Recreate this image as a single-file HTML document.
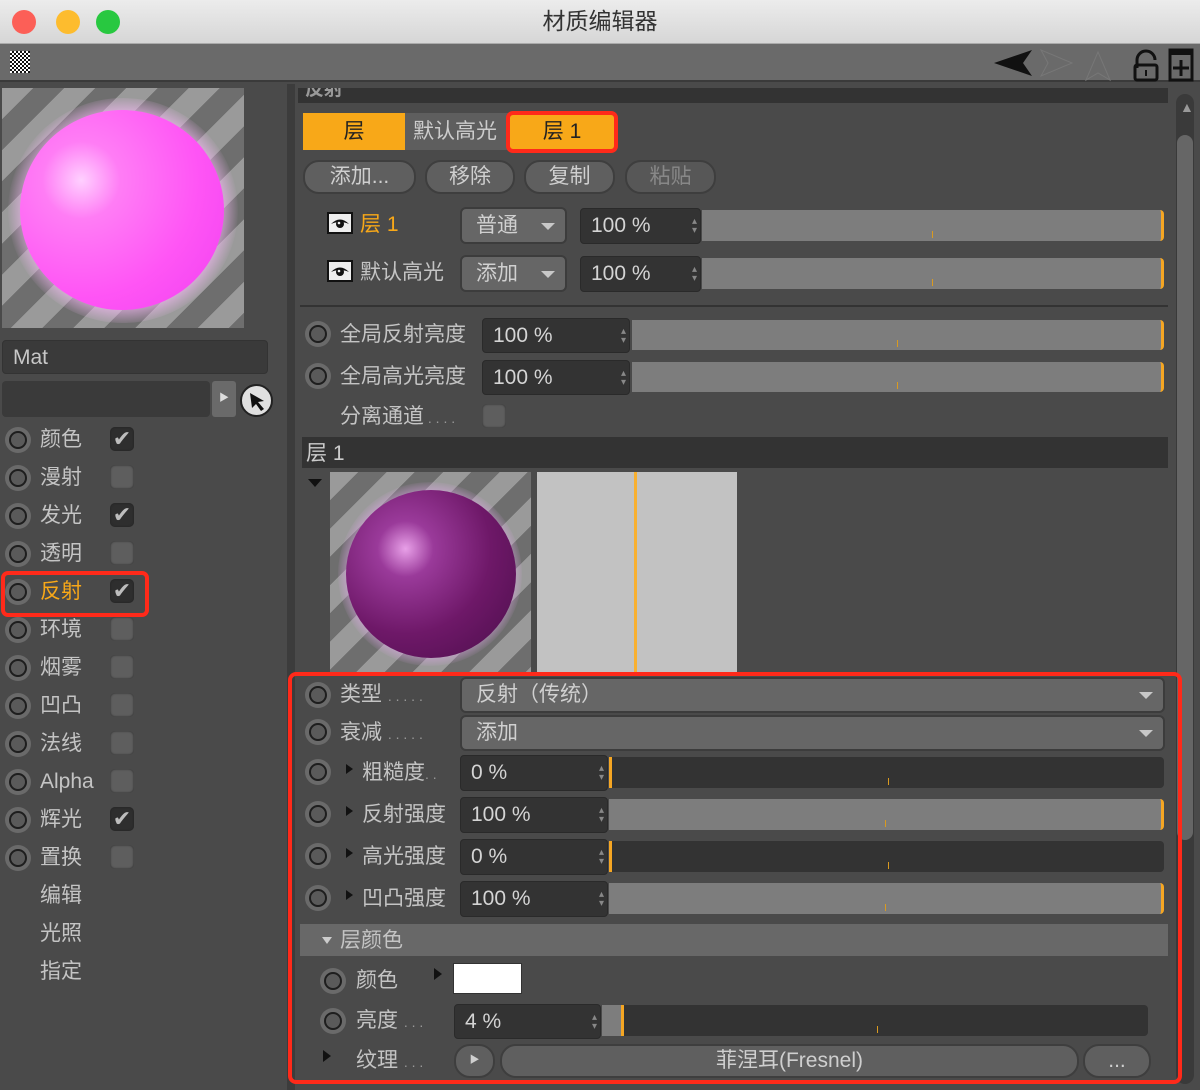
<!DOCTYPE html>
<html><head><meta charset="utf-8"><style>
*{box-sizing:border-box;margin:0;padding:0}
body{width:1200px;height:1090px;background:#4a4a4a;font-family:"Liberation Sans","Noto Sans CJK SC",sans-serif;color:#c8c8c8;position:relative;overflow:hidden}
.a{position:absolute}
.t{position:absolute;font-size:21px;line-height:1;white-space:nowrap;color:#c4c4c4}
.radio{position:absolute;width:26px;height:26px;border-radius:50%;background:#6a6a6a}
.radio:after{content:"";position:absolute;left:4px;top:4px;width:18px;height:18px;border-radius:50%;border:2px solid #1e1e1e;background:#5a5a5a;box-sizing:border-box}
.chk{position:absolute;width:24px;height:24px;border-radius:5px;background:#5e5e5e;box-shadow:inset 0 0 2px #222}
.chk.on{background:#2e2e2e;color:#bdbdbd;font-size:22px;line-height:24px;text-align:center}
.btn{position:absolute;background:#5f5f5f;border-radius:16px;border:2px solid #3e3e3e;color:#cfcfcf;font-size:21px;text-align:center}
.dd{position:absolute;background:#666;border-radius:6px;border:2px solid #3c3c3c;color:#d0d0d0;font-size:21px;padding-left:14px}
.dd:after{content:"";position:absolute;right:10px;top:50%;margin-top:-3px;border:7px solid transparent;border-top:7px solid #c8c8c8;border-bottom:0}
.fld{position:absolute;background:#333;border-radius:4px;border:1px solid #2a2a2a;color:#d4d4d4;font-size:21px;padding-left:10px}
.fld:after{content:"▴\A▾";white-space:pre;position:absolute;right:3px;top:50%;transform:translateY(-50%);font-size:10px;line-height:9px;color:#888}
.sl{position:absolute;background:#7d7d7d;border-right:3px solid #f5a623;border-radius:0 4px 4px 0}
.sl.d{background:#333;border-right:none;border-left:3px solid #f5a623}
.sl i{position:absolute;left:50%;bottom:3px;width:1px;height:7px;background:#d99a20}
.eye{position:absolute;width:26px;height:22px;background:#eee;border:2px solid #111}
</style></head><body>
<div class="a" style="left:0;top:0;width:1200px;height:44px;background:linear-gradient(#ececec,#d6d6d6);border-bottom:1px solid #aaa"></div>
<div class="a" style="left:12px;top:10px;width:24px;height:24px;border-radius:50%;background:#fc5f57"></div>
<div class="a" style="left:56px;top:10px;width:24px;height:24px;border-radius:50%;background:#fdbc2e"></div>
<div class="a" style="left:96px;top:10px;width:24px;height:24px;border-radius:50%;background:#28c840"></div>
<div class="t" style="left:0;width:1200px;text-align:center;top:10px;font-size:23px;color:#333">材质编辑器</div>
<div class="a" style="left:0;top:44px;width:1200px;height:38px;background:#6a6a6a;border-bottom:2px solid #3a3a3a"></div>
<div class="a" style="left:10px;top:51px;width:20px;height:22px;background:repeating-conic-gradient(#111 0 25%,#fff 0 50%) 0 0/4px 4px"></div>
<svg class="a" style="left:990px;top:46px" width="210" height="36">
<path d="M4 17 L42 4 L33 17 L42 30 Z" fill="#111"/>
<path d="M51 4 L82 17 L51 30 L58 17 Z" fill="none" stroke="#777"/>
<path d="M108 6 L120 34 L108 27 L96 34 Z" fill="none" stroke="#777"/>
<path d="M147 22 V14 a9 9 0 0 1 18 0" fill="none" stroke="#111" stroke-width="3"/>
<rect x="145" y="19" width="22" height="15" rx="2" fill="none" stroke="#111" stroke-width="3"/>
<rect x="155" y="24" width="2" height="6" fill="#111"/>
<rect x="180" y="4" width="22" height="30" fill="none" stroke="#111" stroke-width="3"/>
<rect x="180" y="4" width="22" height="5" fill="#111"/>
<path d="M191 14 V30 M183 22 H199" stroke="#111" stroke-width="3"/>
</svg>
<div class="a" style="left:287px;top:84px;width:8px;height:1006px;background:#3c3c3c"></div>
<div class="a" style="left:2px;top:88px;width:242px;height:240px;overflow:hidden;background:repeating-linear-gradient(135deg,#9a9a9a 0 22px,#6e6e6e 22px 44px)">
<div class="a" style="left:6px;top:10px;width:230px;height:225px;border-radius:50%;background:radial-gradient(circle,rgba(255,190,255,.9) 55%,rgba(255,200,255,0) 72%)"></div>
<div class="a" style="left:18px;top:22px;width:204px;height:200px;border-radius:50%;background:radial-gradient(circle at 30% 35%,#ffd0ff 0,#ff7df5 20%,#ff55f5 60%,#f040f0 100%)"></div>
</div>
<div class="a" style="left:2px;top:340px;width:266px;height:34px;background:#3a3a3a;border-radius:4px;border:1px solid #333"></div>
<div class="t" style="left:13px;top:347px;font-size:21px;color:#c8c8c8">Mat</div>
<div class="a" style="left:2px;top:381px;width:208px;height:36px;background:#3a3a3a;border-radius:4px"></div>
<div class="a" style="left:212px;top:381px;width:24px;height:36px;background:#6a6a6a;border-radius:3px;color:#ddd;font-size:10px;line-height:36px;text-align:center">▶</div>
<div class="a" style="left:240px;top:384px;width:33px;height:33px;border-radius:50%;background:#e0e0e0;border:2px solid #222"></div>
<svg class="a" style="left:244px;top:388px" width="26" height="26"><path d="M6 5 L20 13 L14 14 L20 21 L17 23 L12 16 L8 20 Z" fill="#111"/></svg>
<div class="radio" style="left:5px;top:427px"></div><div class="t" style="left:40px;top:429px">颜色</div><div class="chk on" style="left:110px;top:427px">✔</div>
<div class="radio" style="left:5px;top:465px"></div><div class="t" style="left:40px;top:467px">漫射</div><div class="chk" style="left:110px;top:465px"></div>
<div class="radio" style="left:5px;top:503px"></div><div class="t" style="left:40px;top:505px">发光</div><div class="chk on" style="left:110px;top:503px">✔</div>
<div class="radio" style="left:5px;top:541px"></div><div class="t" style="left:40px;top:543px">透明</div><div class="chk" style="left:110px;top:541px"></div>
<div class="a" style="left:1px;top:571px;width:148px;height:46px;border:4px solid #ff2a1a;border-radius:7px"></div>
<div class="radio" style="left:5px;top:579px"></div><div class="t" style="left:40px;top:581px;color:#f8a818">反射</div><div class="chk on" style="left:110px;top:579px">✔</div>
<div class="radio" style="left:5px;top:617px"></div><div class="t" style="left:40px;top:619px">环境</div><div class="chk" style="left:110px;top:617px"></div>
<div class="radio" style="left:5px;top:655px"></div><div class="t" style="left:40px;top:657px">烟雾</div><div class="chk" style="left:110px;top:655px"></div>
<div class="radio" style="left:5px;top:693px"></div><div class="t" style="left:40px;top:695px">凹凸</div><div class="chk" style="left:110px;top:693px"></div>
<div class="radio" style="left:5px;top:731px"></div><div class="t" style="left:40px;top:733px">法线</div><div class="chk" style="left:110px;top:731px"></div>
<div class="radio" style="left:5px;top:769px"></div><div class="t" style="left:40px;top:771px">Alpha</div><div class="chk" style="left:110px;top:769px"></div>
<div class="radio" style="left:5px;top:807px"></div><div class="t" style="left:40px;top:809px">辉光</div><div class="chk on" style="left:110px;top:807px">✔</div>
<div class="radio" style="left:5px;top:845px"></div><div class="t" style="left:40px;top:847px">置换</div><div class="chk" style="left:110px;top:845px"></div>
<div class="t" style="left:40px;top:885px">编辑</div>
<div class="t" style="left:40px;top:923px">光照</div>
<div class="t" style="left:40px;top:961px">指定</div>
<div class="a" style="left:298px;top:88px;width:870px;height:15px;background:#333;overflow:hidden"><div class="t" style="left:7px;top:-8px;font-size:19px;color:#999;font-weight:bold">反射</div></div>
<div class="a" style="left:1176px;top:94px;width:18px;height:990px;background:#3a3a3a;border-radius:9px"></div>
<div class="a" style="left:1177px;top:135px;width:16px;height:705px;background:#666;border-radius:8px"></div>
<div class="a" style="left:1180px;top:99px;color:#999;font-size:14px">▲</div>
<div class="a" style="left:303px;top:113px;width:310px;height:37px;background:#5e5e5e;border-radius:3px"></div>
<div class="a" style="left:303px;top:113px;width:102px;height:37px;background:#f8a818"></div>
<div class="t" style="left:303px;width:102px;text-align:center;top:121px;color:#222">层</div>
<div class="t" style="left:413px;top:121px;color:#ccc">默认高光</div>
<div class="a" style="left:506px;top:111px;width:112px;height:42px;border:4px solid #ff2a1a;border-radius:7px;background:#f8a818"></div>
<div class="t" style="left:506px;width:112px;text-align:center;top:121px;color:#222">层 1</div>
<div class="btn" style="left:303px;top:160px;width:113px;height:34px;line-height:30px">添加...</div>
<div class="btn" style="left:425px;top:160px;width:90px;height:34px;line-height:30px">移除</div>
<div class="btn" style="left:524px;top:160px;width:91px;height:34px;line-height:30px">复制</div>
<div class="btn" style="left:625px;top:160px;width:91px;height:34px;line-height:30px;color:#888;background:#575757">粘贴</div>
<div class="eye" style="left:327px;top:212px"><svg width="22" height="18" style="position:absolute;left:0;top:0"><path d="M2 10 Q11 1 20 10 Q11 6 2 10Z" fill="#111"/><circle cx="11" cy="10" r="4" fill="#111"/><circle cx="10" cy="9" r="1.3" fill="#eee"/></svg></div><div class="t" style="left:360px;top:214px;color:#f8a818">层 1</div>
<div class="dd" style="left:460px;top:207px;width:107px;height:37px;line-height:33px">普通</div>
<div class="fld" style="left:580px;top:208px;width:121px;height:36px;line-height:34px">100 %</div>
<div class="sl" style="left:702px;top:210px;width:462px;height:31px"><i></i></div>
<div class="eye" style="left:327px;top:260px"><svg width="22" height="18" style="position:absolute;left:0;top:0"><path d="M2 10 Q11 1 20 10 Q11 6 2 10Z" fill="#111"/><circle cx="11" cy="10" r="4" fill="#111"/><circle cx="10" cy="9" r="1.3" fill="#eee"/></svg></div><div class="t" style="left:360px;top:262px">默认高光</div>
<div class="dd" style="left:460px;top:255px;width:107px;height:37px;line-height:33px">添加</div>
<div class="fld" style="left:580px;top:256px;width:121px;height:36px;line-height:34px">100 %</div>
<div class="sl" style="left:702px;top:258px;width:462px;height:31px"><i></i></div>
<div class="a" style="left:300px;top:305px;width:868px;height:2px;background:#333"></div>
<div class="radio" style="left:305px;top:321px"></div><div class="t" style="left:340px;top:324px">全局反射亮度</div>
<div class="fld" style="left:482px;top:318px;width:148px;height:35px;line-height:33px">100 %</div>
<div class="sl" style="left:632px;top:320px;width:532px;height:30px"><i></i></div>
<div class="radio" style="left:305px;top:363px"></div><div class="t" style="left:340px;top:366px">全局高光亮度</div>
<div class="fld" style="left:482px;top:360px;width:148px;height:35px;line-height:33px">100 %</div>
<div class="sl" style="left:632px;top:362px;width:532px;height:30px"><i></i></div>
<div class="t" style="left:340px;top:406px">分离通道<span style="font-size:14px;color:#999"> . . . .</span></div>
<div class="chk" style="left:482px;top:404px"></div>
<div class="a" style="left:302px;top:437px;width:866px;height:31px;background:#333"></div>
<div class="t" style="left:306px;top:443px;color:#ccc">层 1</div>
<div class="a" style="left:308px;top:479px;border:7px solid transparent;border-top:8px solid #111"></div>
<div class="a" style="left:330px;top:472px;width:201px;height:200px;overflow:hidden;background:repeating-linear-gradient(135deg,#9a9a9a 0 20px,#6e6e6e 20px 40px)">
<div class="a" style="left:8px;top:10px;width:184px;height:184px;border-radius:50%;background:radial-gradient(circle,rgba(230,170,240,.9) 55%,rgba(230,170,240,0) 72%)"></div>
<div class="a" style="left:16px;top:18px;width:170px;height:168px;border-radius:50%;background:radial-gradient(circle at 35% 35%,#e8a0e8 0,#9a3a9a 18%,#6e1868 55%,#4a0e4a 100%)"></div>
</div>
<div class="a" style="left:537px;top:472px;width:200px;height:200px;background:#c2c2c2"></div>
<div class="a" style="left:634px;top:472px;width:3px;height:200px;background:#f8b030"></div>
<div class="radio" style="left:305px;top:682px"></div><div class="t" style="left:340px;top:684px">类型 <span style="font-size:14px;color:#999">. . . . .</span></div>
<div class="dd" style="left:460px;top:677px;width:705px;height:36px;line-height:32px">反射（传统）</div>
<div class="radio" style="left:305px;top:719px"></div><div class="t" style="left:340px;top:722px">衰减 <span style="font-size:14px;color:#999">. . . . .</span></div>
<div class="dd" style="left:460px;top:715px;width:705px;height:36px;line-height:32px">添加</div>
<div class="radio" style="left:305px;top:759px"></div><div class="a" style="left:346px;top:764px;border:5px solid transparent;border-left:7px solid #111"></div><div class="t" style="left:362px;top:762px">粗糙度<span style="font-size:14px;color:#999">. .</span></div>
<div class="fld" style="left:460px;top:755px;width:148px;height:36px;line-height:34px">0 %</div>
<div class="sl d" style="left:609px;top:757px;width:555px;height:31px"><i></i></div>
<div class="radio" style="left:305px;top:801px"></div><div class="a" style="left:346px;top:806px;border:5px solid transparent;border-left:7px solid #111"></div><div class="t" style="left:362px;top:804px">反射强度</div>
<div class="fld" style="left:460px;top:797px;width:148px;height:36px;line-height:34px">100 %</div>
<div class="sl" style="left:609px;top:799px;width:555px;height:31px"><i></i></div>
<div class="radio" style="left:305px;top:843px"></div><div class="a" style="left:346px;top:848px;border:5px solid transparent;border-left:7px solid #111"></div><div class="t" style="left:362px;top:846px">高光强度</div>
<div class="fld" style="left:460px;top:839px;width:148px;height:36px;line-height:34px">0 %</div>
<div class="sl d" style="left:609px;top:841px;width:555px;height:31px"><i></i></div>
<div class="radio" style="left:305px;top:885px"></div><div class="a" style="left:346px;top:890px;border:5px solid transparent;border-left:7px solid #111"></div><div class="t" style="left:362px;top:888px">凹凸强度</div>
<div class="fld" style="left:460px;top:881px;width:148px;height:36px;line-height:34px">100 %</div>
<div class="sl" style="left:609px;top:883px;width:555px;height:31px"><i></i></div>
<div class="a" style="left:300px;top:924px;width:868px;height:32px;background:#686868"></div>
<div class="a" style="left:322px;top:937px;border:5px solid transparent;border-top:7px solid #ccc"></div>
<div class="t" style="left:340px;top:930px">层颜色</div>
<div class="radio" style="left:320px;top:968px"></div><div class="t" style="left:356px;top:970px">颜色</div>
<div class="a" style="left:434px;top:968px;border:6px solid transparent;border-left:8px solid #111"></div>
<div class="a" style="left:453px;top:963px;width:69px;height:31px;background:#fff;border:1px solid #333"></div>
<div class="radio" style="left:320px;top:1008px"></div><div class="t" style="left:356px;top:1010px">亮度 <span style="font-size:14px;color:#999">. . .</span></div>
<div class="fld" style="left:454px;top:1004px;width:147px;height:35px;line-height:33px">4 %</div>
<div class="a" style="left:602px;top:1005px;width:546px;height:31px;background:#333;border-radius:0 4px 4px 0"></div>
<div class="a" style="left:602px;top:1005px;width:22px;height:31px;background:#7d7d7d;border-right:3px solid #f5a623"></div>
<div class="a" style="left:877px;top:1026px;width:1px;height:7px;background:#d99a20"></div>
<div class="a" style="left:323px;top:1050px;border:6px solid transparent;border-left:8px solid #111"></div>
<div class="t" style="left:356px;top:1050px">纹理 <span style="font-size:14px;color:#999">. . .</span></div>
<div class="btn" style="left:454px;top:1044px;width:41px;height:34px;line-height:30px;font-size:10px">▶</div>
<div class="btn" style="left:500px;top:1044px;width:579px;height:34px;line-height:30px">菲涅耳(Fresnel)</div>
<div class="btn" style="left:1083px;top:1044px;width:68px;height:34px;line-height:30px">...</div>
<div class="a" style="left:288px;top:672px;width:894px;height:412px;border:4px solid #ff2a1a;border-radius:8px"></div>
</body></html>
